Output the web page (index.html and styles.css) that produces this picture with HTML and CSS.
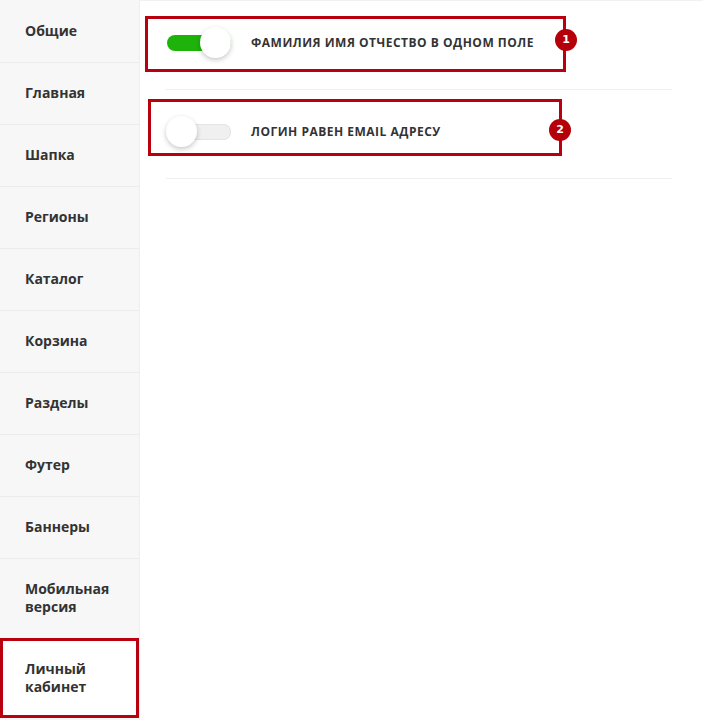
FILE: index.html
```html
<!DOCTYPE html>
<html lang="ru">
<head>
<meta charset="utf-8">
<link rel="stylesheet" href="styles.css">
</head>
<body>
<div class="page">
  <nav class="sidebar">
    <div class="nav-item">Общие</div>
    <div class="nav-item">Главная</div>
    <div class="nav-item">Шапка</div>
    <div class="nav-item">Регионы</div>
    <div class="nav-item">Каталог</div>
    <div class="nav-item">Корзина</div>
    <div class="nav-item">Разделы</div>
    <div class="nav-item">Футер</div>
    <div class="nav-item">Баннеры</div>
    <div class="nav-item">Мобильная<br>версия</div>
    <div class="nav-item active">Личный<br>кабинет</div>
  </nav>
  <main class="main">
    <div class="row">
      <span class="switch"><span class="toggle on"><span class="knob"></span></span></span>
      <span class="label">Фамилия имя отчество в одном поле</span>
    </div>
    <div class="row">
      <span class="switch"><span class="toggle"><span class="knob"></span></span></span>
      <span class="label">Логин равен email адресу</span>
    </div>
  </main>
</div>
<div class="mark mark-1"></div>
<div class="badge badge-1">1</div>
<div class="mark mark-2"></div>
<div class="badge badge-2">2</div>
<div class="mark mark-3"></div>
</body>
</html>
```
FILE: styles.css
```css
html, body {
  margin: 0;
  padding: 0;
  background: #fff;
  font-family: "Open Sans", "Noto Sans", sans-serif;
  color: #333;
}
.page {
  display: flex;
  min-height: 720px;
}
.sidebar {
  width: 139px;
  flex: none;
  padding-top: 1px;
  background: #f7f7f7;
  border-right: 1px solid #eeeeee;
}
.nav-item {
  padding: 21px 10px 22px 25px;
  font-size: 14px;
  font-weight: 700;
  line-height: 18px;
  border-bottom: 1px solid #ececec;
}
.nav-item.active {
  background: #fff;
  border-bottom: none;
}
.main {
  flex: 1;
  border-top: 1px solid #f1f1f1;
  padding: 0 31px 0 26px;
}
.row {
  display: flex;
  align-items: center;
  padding: 26px 0 31px 0;
  border-bottom: 1px solid #efefef;
}
.switch {
  flex: none;
  height: 31px;
  display: flex;
  align-items: center;
  margin-left: 1px;
}
.toggle {
  width: 64px;
  height: 16px;
  border-radius: 8px;
  background: #f0f0f0;
  box-shadow: inset 0 0 0 1px #e4e4e4;
  display: flex;
  align-items: center;
}
.toggle.on {
  background: #1db30b;
  box-shadow: none;
  justify-content: flex-end;
}
.knob {
  width: 31px;
  height: 31px;
  flex: none;
  border-radius: 50%;
  background: #fff;
  box-shadow: 0 2px 5px rgba(0, 0, 0, 0.22);
  margin-left: -1px;
}
.toggle.on .knob {
  margin-left: 0;
}
.label {
  margin-left: 20px;
  font-size: 12px;
  font-weight: 700;
  text-transform: uppercase;
  letter-spacing: 0.5px;
  color: #333;
}
.mark {
  position: absolute;
  border: 3px solid #b8000f;
  box-sizing: border-box;
}
.mark-1 { left: 145px; top: 16px; width: 421px; height: 56px; }
.mark-2 { left: 148px; top: 99px; width: 414px; height: 57px; }
.mark-3 { left: 0; top: 638px; width: 139px; height: 80px; }
.badge {
  position: absolute;
  width: 22px;
  height: 22px;
  border-radius: 50%;
  background: #b5000a;
  color: #fff;
  font-family: "DejaVu Sans", sans-serif;
  font-weight: 700;
  font-size: 11px;
  line-height: 22px;
  text-align: center;
}
.badge-1 { left: 555px; top: 29px; }
.badge-2 { left: 549px; top: 119px; }
```
